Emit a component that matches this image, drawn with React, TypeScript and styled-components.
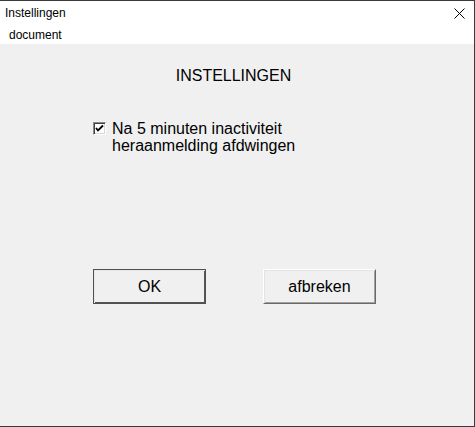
import React from "react";
import styled, { createGlobalStyle } from "styled-components";

const Global = createGlobalStyle`
  html, body { margin: 0; padding: 0; background: #f0f0f0; overflow: hidden; }
  * { box-sizing: border-box; }
`;

const Window = styled.div`
  width: 475px;
  height: 427px;
  display: flex;
  flex-direction: column;
  border-top: 1px solid #3a3a3a;
  border-right: 1px solid #3a3a3a;
  border-bottom: 1px solid #3a3a3a;
  background: #f0f0f0;
  font-family: "Liberation Sans", Arial, sans-serif;
  color: #000;
`;

const TitleBar = styled.div`
  height: 21px;
  flex: none;
  background: #fff;
  display: flex;
  align-items: flex-start;
  justify-content: space-between;
  padding: 5px 0 0 5px;
  font-size: 12px;
  line-height: 14px;
`;

const CloseIcon = styled.svg`
  width: 11px;
  height: 11px;
  margin: 2px 9px 0 0;
`;

const MenuBar = styled.div`
  height: 22px;
  flex: none;
  background: #fff;
  padding: 6px 0 0 9px;
  font-size: 12px;
  line-height: 14px;
`;

const Body = styled.div`
  flex: 1;
  display: flex;
  flex-direction: column;
  padding-top: 23px;
  font-size: 16px;
`;

const Heading = styled.div`
  line-height: 18px;
  text-align: center;
  padding-right: 7px;
`;

const OptionRow = styled.label`
  display: flex;
  align-items: flex-start;
  gap: 6px;
  margin: 35px 0 0 93px;
  line-height: 17px;
`;

const Box = styled.span`
  flex: none;
  width: 13px;
  height: 13px;
  margin-top: 2px;
  background: #fff;
  border-top: 1px solid #8a8a8a;
  border-left: 1px solid #8a8a8a;
  border-right: 1px solid #ffffff;
  border-bottom: 1px solid #ffffff;
  box-shadow: inset 1px 1px 0 #404040, inset -1px -1px 0 #d8d8d8;
  display: flex;
  align-items: center;
  justify-content: center;
`;

const ButtonRow = styled.div`
  display: flex;
  gap: 57px;
  margin: 115px 0 0 93px;
`;

const Button = styled.button<{ $default?: boolean }>`
  width: 113px;
  height: 35px;
  font-family: "Liberation Sans", Arial, sans-serif;
  font-size: 16px;
  color: #000;
  background: #f0f0f0;
  padding: 0;
  border-style: solid;
  border-width: 1px;
  border-color: ${(p) =>
    p.$default ? "#505050 #505050 #505050 #505050" : "#ffffff #696969 #696969 #ffffff"};
  box-shadow: ${(p) =>
    p.$default
      ? "inset 1px 1px 0 #e8e8e8, inset -1px -1px 0 #555555"
      : "inset 1px 1px 0 #e3e3e3, inset -1px -1px 0 #a0a0a0"};
`;

export default function App() {
  return (
    <>
      <Global />
      <Window>
        <TitleBar>
          <span>Instellingen</span>
          <CloseIcon viewBox="0 0 11 11">
            <path d="M0.5 0.5 L10.5 10.5 M10.5 0.5 L0.5 10.5" stroke="#000" strokeWidth="1" fill="none" />
          </CloseIcon>
        </TitleBar>
        <MenuBar>document</MenuBar>
        <Body>
          <Heading>INSTELLINGEN</Heading>
          <OptionRow>
            <Box>
              <svg width="9" height="9" viewBox="0 0 9 9">
                <path d="M1 4 L3 6.5 L8 1.5" stroke="#000" strokeWidth="1.8" fill="none" />
              </svg>
            </Box>
            <span>
              Na 5 minuten inactiviteit
              <br />
              heraanmelding afdwingen
            </span>
          </OptionRow>
          <ButtonRow>
            <Button $default>OK</Button>
            <Button>afbreken</Button>
          </ButtonRow>
        </Body>
      </Window>
    </>
  );
}
